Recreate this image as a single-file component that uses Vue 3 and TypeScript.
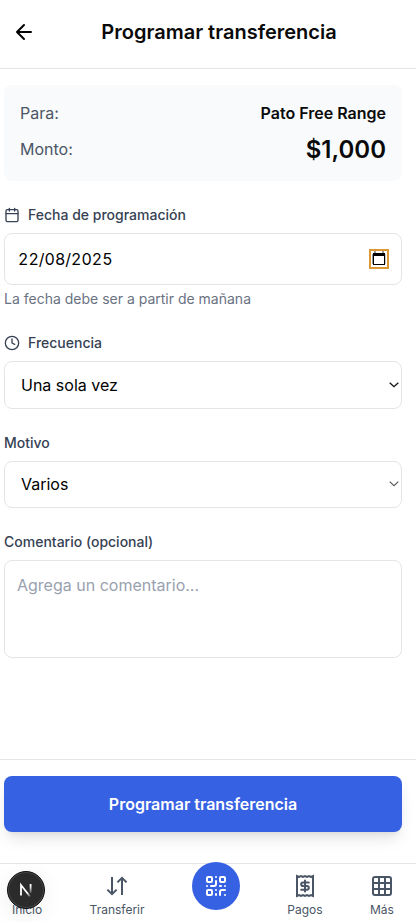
<script setup lang="ts">
import { ref } from 'vue'

const fecha = ref('22/08/2025')
const frecuencia = ref('Una sola vez')
const motivo = ref('Varios')
const comentario = ref('')
</script>

<template>
  <div class="screen">
    <header class="header">
      <button class="back" type="button">
        <svg width="24" height="24" viewBox="0 0 24 24" fill="none" stroke="currentColor" stroke-width="2" stroke-linecap="round" stroke-linejoin="round"><path d="m12 19-7-7 7-7M19 12H5" /></svg>
      </button>
      <h1>Programar transferencia</h1>
    </header>

    <main class="content">
      <section class="summary">
        <div class="row"><span>Para:</span><strong class="name">Pato Free Range</strong></div>
        <div class="row amount-row"><span>Monto:</span><strong class="amount">$1,000</strong></div>
      </section>

      <div class="field date-field">
        <label class="label">
          <svg width="16" height="16" viewBox="0 0 24 24" fill="none" stroke="currentColor" stroke-width="2" stroke-linecap="round" stroke-linejoin="round"><path d="M8 2v4M16 2v4M3 10h18" /><rect x="3" y="4" width="18" height="18" rx="2" /></svg>
          <span>Fecha de programación</span>
        </label>
        <div class="control date">
          <input v-model="fecha" class="date-input" type="text" />
          <button class="picker" type="button">
            <svg width="16" height="16" viewBox="0 0 16 16"><path fill="#999" d="M3 0h2v2H3zM11 0h2v2h-2zM1 3h1v10H1zM14 3h.5v10H14z" /><path fill="#000" fill-rule="evenodd" d="M2 2h12v12H2zM3 5v8h10V5z" /></svg>
          </button>
        </div>
        <p class="hint">La fecha debe ser a partir de mañana</p>
      </div>

      <div class="field freq-field">
        <label class="label">
          <svg width="16" height="16" viewBox="0 0 24 24" fill="none" stroke="currentColor" stroke-width="2" stroke-linecap="round" stroke-linejoin="round"><circle cx="12" cy="12" r="10" /><path d="M12 6v6l4 2" /></svg>
          <span>Frecuencia</span>
        </label>
        <div class="control select">
          <select v-model="frecuencia"><option>Una sola vez</option></select>
          <svg class="chevron" width="10" height="6" viewBox="0 0 10 6" fill="none" stroke="#111" stroke-width="1.3"><path d="m.7.7 4.3 4 4.3-4" /></svg>
        </div>
      </div>

      <div class="field motivo-field">
        <label class="label"><span>Motivo</span></label>
        <div class="control select">
          <select v-model="motivo"><option>Varios</option></select>
          <svg class="chevron" width="10" height="6" viewBox="0 0 10 6" fill="none" stroke="#555" stroke-width="1.1"><path d="m.7.7 4.3 4 4.3-4" /></svg>
        </div>
      </div>

      <div class="field">
        <label class="label"><span>Comentario (opcional)</span></label>
        <textarea v-model="comentario" class="control comment" placeholder="Agrega un comentario..."></textarea>
      </div>
    </main>

    <div class="action"><button class="submit" type="button">Programar transferencia</button></div>

    <nav class="nav">
      <a class="item home"><span class="icon-space"></span><span>Inicio</span></a>
      <a class="item transfer">
        <svg width="24" height="24" viewBox="0 0 24 24" fill="none" stroke="currentColor" stroke-width="2"><path d="M7 3v17M2.4 15.6 7 20.2l4.6-4.6M17 21V4M12.4 8.4 17 3.8l4.6 4.6" /></svg>
        <span>Transferir</span>
      </a>
      <a class="qr">
        <svg width="24" height="24" viewBox="0 0 24 24" fill="none" stroke="currentColor" stroke-width="2" stroke-linecap="round" stroke-linejoin="round"><rect x="3" y="3" width="5" height="5" rx="1" /><rect x="16" y="3" width="5" height="5" rx="1" /><rect x="3" y="16" width="5" height="5" rx="1" /><path d="M21 16h-3a2 2 0 0 0-2 2v3M21 21v.01M12 7v3a2 2 0 0 1-2 2H7M3 12h.01M12 3h.01M12 16v.01M16 12h1M21 12v.01M12 21v-1" /></svg>
      </a>
      <a class="item pagos">
        <svg width="24" height="24" viewBox="0 0 24 24" fill="none" stroke="currentColor" stroke-width="2"><path d="M4 2v20l2-1 2 1 2-1 2 1 2-1 2 1 2-1 2 1V2l-2 1-2-1-2 1-2-1-2 1-2-1-2 1z" /><path stroke-linecap="round" d="M15.8 8.5H10a1.8 1.8 0 0 0 0 3.6h4a1.8 1.8 0 0 1 0 3.6H8.2M12 6.5v11" /></svg>
        <span>Pagos</span>
      </a>
      <a class="item mas">
        <svg width="24" height="24" viewBox="0 0 24 24" fill="none" stroke="currentColor" stroke-width="2"><rect x="3" y="3" width="18" height="18" rx="2" /><path d="M3 9h18M3 15h18M9 3v18M15 3v18" /></svg>
        <span>Más</span>
      </a>
      <div class="dev-badge">
        <svg width="20" height="20" viewBox="0 0 20 20" fill="none" stroke-width="1.8">
          <defs>
            <linearGradient id="fade-v" x1="0" y1="4" x2="0" y2="14" gradientUnits="userSpaceOnUse"><stop offset=".2" stop-color="#fff" /><stop offset="1" stop-color="#fff" stop-opacity="0.1" /></linearGradient>
            <linearGradient id="fade-d" x1="5" y1="5" x2="14" y2="16.5" gradientUnits="userSpaceOnUse"><stop offset=".7" stop-color="#fff" /><stop offset="1" stop-color="#fff" stop-opacity="0.2" /></linearGradient>
          </defs>
          <path stroke="url(#fade-d)" d="M5 15.5V5l9 11.5" /><path stroke="url(#fade-v)" d="M14.6 4v9" />
        </svg>
      </div>
    </nav>
  </div>
</template>

<style>
body { margin: 0; background: #fff; }
</style>

<style scoped>
* { box-sizing: border-box; }
.screen { display: flex; flex-direction: column; width: 416px; height: 922px; overflow: hidden; background: #fff; color: #0a0a0a; font-family: Inter, "Liberation Sans", sans-serif; font-size: 16px; line-height: 24px; }
button, input, select, textarea { font: inherit; color: #000; background: transparent; border: 0; margin: 0; padding: 0; outline: 0; }
svg { display: block; flex: none; }
.header { display: flex; align-items: center; height: 69px; padding: 0 12px 5px; border-bottom: 1px solid #e5e5e5; }
.back { width: 24px; height: 24px; }
h1 { flex: 1; margin: 0 0 0 -2px; text-align: center; font-size: 20px; line-height: 28px; font-weight: 600; }
.content { flex: 1; padding: 16px 14px 0 4px; }
.summary { height: 96px; padding: 16px; border-radius: 8px; background: #f9fafb; }
.row { display: flex; align-items: center; justify-content: space-between; color: #4a5565; height: 24px; }
.amount-row { height: 32px; margin-top: 8px; }
.row strong { color: #0a0a0a; font-weight: 600; }
.row .amount { padding-top: 1px; font-size: 24px; line-height: 32px; }
.field { display: flex; flex-direction: column; }
.date-field { padding-top: 24px; height: 148px; }
.freq-field { height: 100.5px; padding-top: 4px; }
.motivo-field { height: 102.5px; padding-top: 3px; }
.label { display: flex; align-items: center; gap: 8px; height: 20px; margin-bottom: 8px; color: #364153; font-size: 14px; line-height: 20px; font-weight: 500; }
.control { border: 1px solid #e5e5e5; border-radius: 8px; background: #fff; }
.date { display: flex; align-items: center; height: 52px; padding: 0 12px 0 13px; }
.date-input { flex: 1; min-width: 0; font-variant-numeric: tabular-nums; }
.picker { width: 20px; height: 20px; border: 2px solid #dc9832; }
.hint { margin: 4px 0 0; color: #6a7282; font-size: 14px; line-height: 20px; }
.select { display: flex; align-items: center; height: 47.5px; padding: 0 2px 0 16px; }
.select select { flex: 1; appearance: none; height: 24px; }
.comment { display: block; width: 100%; height: 98px; padding: 12px; resize: none; border: 1px solid #e5e5e5; }
.comment::placeholder { color: #99a1af; opacity: 1; }
.action { height: 104px; padding: 16px 14px 0 4px; border-top: 1px solid #e5e5e5; }
.submit { width: 100%; height: 56px; border-radius: 8px; background: #3761e3; color: #fff; font-weight: 600; box-shadow: 0 10px 15px -3px #0000001a, 0 4px 6px -4px #0000001a; }
.nav { position: relative; display: flex; align-items: flex-start; justify-content: space-between; height: 59px; padding: 0 22px 0 12px; border-top: 1px solid #e5e5e5; background: #fff; }
.item { display: flex; flex-direction: column; align-items: center; gap: 4px; padding-top: 10px; color: #4a5565; font-size: 12px; line-height: 16px; }
.icon-space { height: 24px; }
.qr { display: grid; place-items: center; width: 48px; height: 48px; margin-top: -2px; border-radius: 50%; background: #3761e3; color: #fff; }
.dev-badge { position: absolute; left: 7px; top: 7px; display: grid; place-items: center; width: 38px; height: 38px; border-radius: 50%; background: #2b2b2b; border: 1px solid #111; box-shadow: inset 0 0 0 1px #484848, 0 6px 24px #00000012; }
</style>
